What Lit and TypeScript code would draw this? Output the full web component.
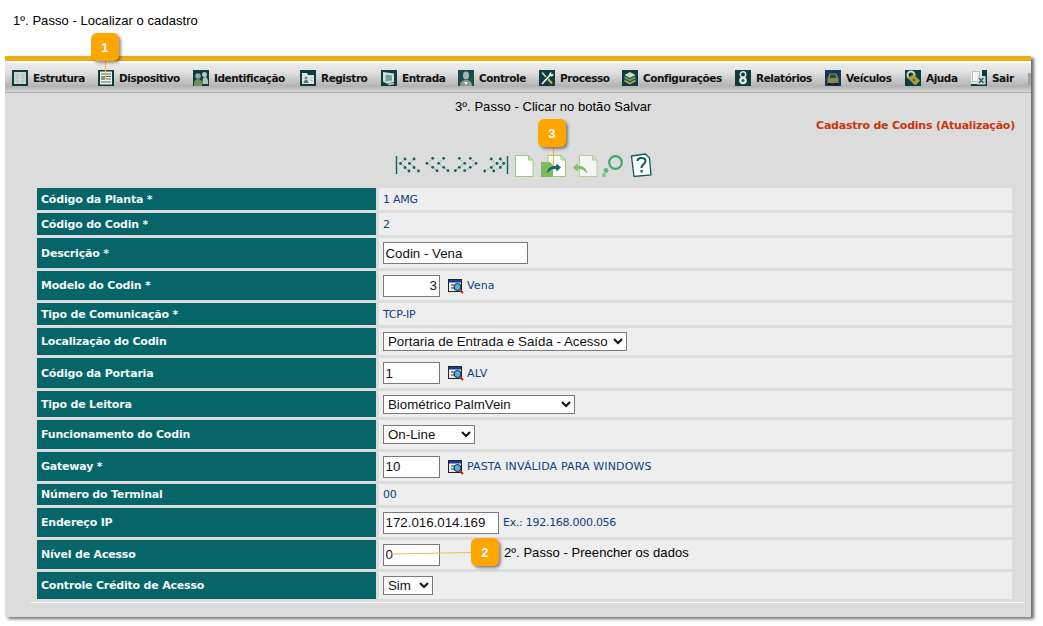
import { LitElement, html, css, svg, nothing } from "lit";
import { customElement } from "lit/decorators.js";

const D = "#0e3b3f";
const navIcons: Record<string, unknown> = {
  estrutura: svg`<rect width="16" height="16" fill="${D}"/><rect x="2" y="2" width="12" height="12" fill="#c6d4cd"/><path d="M4 5h8M4 8h8M4 11h8" stroke="#a9bdb3"/><path d="M8 3v10" stroke="#dbe4df"/>`,
  dispositivo: svg`<rect width="16" height="16" fill="${D}"/><rect x="2" y="1.500" width="12" height="13" fill="#eef2e8"/><path d="M3 4h10M8 6.500h5M8 9h5M3 12h10" stroke="#51706a"/><rect x="3" y="6" width="4" height="4" fill="#7e968f"/>`,
  identificacao: svg`<rect width="16" height="16" fill="${D}"/><circle cx="5" cy="6" r="2.800" fill="#97a8a0"/><circle cx="11.500" cy="4.500" r="2.500" fill="#b9c6c0"/><path d="M1 16v-3c0-3 2-4 4-4s4 1 4 4v3z" fill="#6f8f55"/><path d="M9.500 12c0-3 .5-5 2.500-5s3 2 3 5v2H9.500z" fill="#b3c2bb"/>`,
  registro: svg`<rect width="16" height="16" fill="${D}"/><path d="M2 3h5l1 2h6v9H2z" fill="#dbe4e2"/><circle cx="6" cy="8" r="1.500" fill="#6b8a86"/><path d="M3.500 13c0-2 1-3 2.500-3s2.500 1 2.500 3z" fill="#557a76"/><path d="M10 8h3M10 10.500h3" stroke="#a8bbb8"/>`,
  entrada: svg`<rect width="16" height="16" fill="${D}"/><path d="M2 2l11 1.500v8.500l-7.500 1.500-3.500-2z" fill="#d5e2dc"/><path d="M4.500 4.500l6.500 .8v5.200l-6.500 1z" fill="#6fa39a"/><path d="M6 13.500l7-1v2l-5 .8z" fill="#a9bfb8"/>`,
  controle: svg`<rect width="16" height="16" fill="#1b4a4c"/><ellipse cx="8" cy="5.500" rx="3" ry="4" fill="#a7b2af"/><path d="M2 16c0-4 2-6 6-6s6 2 6 6z" fill="#8a9996"/><path d="M6 12l2 3 2-3z" fill="#e8eeec"/>`,
  processo: svg`<rect width="16" height="16" fill="${D}"/><path d="M3 14L12 4" stroke="#eef2ee" stroke-width="1.800"/><path d="M12.500 2a2.500 2.500 0 0 0-2 3l2 1.500a2.500 2.500 0 0 0 2-3l-1.500 1-1-1z" fill="#eef2ee"/><path d="M3 2.500l4 4.500" stroke="#c8d2ce" stroke-width="1.600"/><path d="M9 9l4 4.500" stroke="#c9b84a" stroke-width="2"/>`,
  configuracoes: svg`<rect width="16" height="16" fill="${D}"/><path d="M2.500 5l5.500-3 5.500 3-5.500 3z" fill="#cfd8b8"/><path d="M2.500 6l5.500 3 5.500-3v2.500l-5.500 3-5.500-3z" fill="#5f9a72"/><path d="M2.500 9.500l5.500 3 5.500-3v2l-5.500 3-5.500-3z" fill="#b3ad55"/>`,
  relatorios: svg`<rect width="16" height="16" fill="${D}"/><circle cx="8" cy="4.500" r="2.700" fill="none" stroke="#dfe7e3" stroke-width="1.500"/><circle cx="8" cy="10.500" r="3.800" fill="#e7ece9"/><circle cx="8" cy="10.500" r="1.500" fill="#3b5f5f"/>`,
  veiculos: svg`<rect width="16" height="16" fill="#12365a"/><path d="M4.500 3.500h7l2 5v4.500h-11V8.500z" fill="#8c874a"/><path d="M5.500 4.500h5l1 3.500h-7z" fill="#2f4548"/><rect x="3" y="13" width="3" height="2" fill="#081820"/><rect x="10" y="13" width="3" height="2" fill="#081820"/>`,
  ajuda: svg`<rect width="16" height="16" fill="${D}"/><circle cx="6" cy="5" r="3.500" fill="none" stroke="#d3dac6" stroke-width="2"/><path d="M2.500 8l6-3.500 6.500 6-4 4.500-2.500-1z" fill="#a89f3c"/><circle cx="9" cy="10" r="1.200" fill="#5c5620"/>`,
  sair: svg`<rect width="16" height="16" fill="${D}"/><rect x="0" y="0" width="11" height="6" fill="#e1e8e7"/><rect x="0" y="0" width="6" height="14" fill="#e1e8e7"/><rect x="1.500" y="1.500" width="7" height="10" fill="#f4f7f6" stroke="#b4c2c1"/><rect x="6" y="6" width="8.500" height="8.500" fill="#cfdcdb"/><path d="M8 8l4.500 5M12.500 8l-4.500 5" stroke="#2d5a5a" stroke-width="1.300"/>`,
};

const NAV: [string, string, number][] = [
  ["estrutura", "Estrutura", 86], ["dispositivo", "Dispositivo", 95], ["identificacao", "Identificação", 107],
  ["registro", "Registro", 81], ["entrada", "Entrada", 77], ["controle", "Controle", 81], ["processo", "Processo", 83],
  ["configuracoes", "Configurações", 113], ["relatorios", "Relatórios", 90], ["veiculos", "Veículos", 80],
  ["ajuda", "Ajuda", 66], ["sair", "Sair", 50],
];

// Dots of the four first/previous/next/last arrows, in the toolbar icon's own coordinates.
const ARROW_DOTS = [
  [10, 4], [5.500, 8.500], [10, 12.500], [14, 16], [19, 4], [14.500, 8.500], [19, 12.500], [23.500, 16],
  [37.700, 3.300], [32, 8.300], [37.700, 12.300], [42, 15.700], [48.700, 3.300], [43.700, 8.300], [48.700, 12.300], [53, 15.700],
  [64.300, 3.300], [69.700, 8.300], [64.300, 12.300], [60.300, 15.700], [75.300, 3.300], [81, 8.300], [75.300, 12.300], [69.700, 15.700],
  [96.300, 4], [102, 8.500], [96.300, 12.500], [89.700, 16], [105.300, 4], [108.700, 8.500], [105.300, 12.500], [98.700, 16],
];
const MID_DOTS = [
  [7.700, 6.300], [7.700, 10.500], [12, 14.300], [16.700, 6.300], [16.700, 10.500], [21, 14.300],
  [35, 5.800], [35, 10.300], [39.700, 14], [46, 5.800], [46, 10.300], [50.700, 14],
  [67, 5.800], [67, 10.300], [62.300, 14], [78, 5.800], [78, 10.300], [72.700, 14],
  [99, 6.300], [99, 10.500], [93, 14.300], [107, 6.300], [107, 10.500], [102, 14.300],
];

const pageSheet = svg`<path d="M.5.5h13l4.500 4.500v16.500H.5z" fill="#fff" stroke="#9ccb7a"/><path d="M13.500.5V5H18z" fill="#cfe6bd" stroke="#9ccb7a"/>`;

type Row = { label: string; h: number; kind: string; text?: string; w?: number; right?: boolean; link?: string; note?: string; plain?: string };
const ROWS: Row[] = [
  { label: "Código da Planta *", h: 22, kind: "text", text: "1 AMG" },
  { label: "Código do Codin *", h: 22, kind: "text", text: "2" },
  { label: "Descrição *", h: 30, kind: "input", text: "Codin - Vena", w: 145 },
  { label: "Modelo do Codin *", h: 29, kind: "input", text: "3", w: 57, right: true, link: "Vena" },
  { label: "Tipo de Comunicação *", h: 22, kind: "text", text: "TCP-IP" },
  { label: "Localização do Codin", h: 27, kind: "select", text: "Portaria de Entrada e Saída - Acesso", w: 244 },
  { label: "Código da Portaria", h: 30, kind: "input", text: "1", w: 57, link: "ALV" },
  { label: "Tipo de Leitora", h: 26, kind: "select", text: "Biométrico PalmVein", w: 192 },
  { label: "Funcionamento do Codin", h: 29, kind: "select", text: "On-Line", w: 92 },
  { label: "Gateway *", h: 29, kind: "input", text: "10", w: 57, link: "PASTA INVÁLIDA PARA WINDOWS" },
  { label: "Número do Terminal", h: 21, kind: "text", text: "00" },
  { label: "Endereço IP", h: 29, kind: "input", text: "172.016.014.169", w: 116, note: "Ex.: 192.168.000.056" },
  { label: "Nível de Acesso", h: 29, kind: "input", text: "0", w: 57, plain: "2º. Passo - Preencher os dados" },
  { label: "Controle Crédito de Acesso", h: 27, kind: "select", text: "Sim", w: 50 },
];

@customElement("app-root")
export class AppRoot extends LitElement {
  static styles = css`
    :host { display: block; position: relative; width: 1043px; height: 626px; overflow: hidden; background: #fff; font-family: "Liberation Sans", Arial, sans-serif; font-size: 13px; letter-spacing: .05px; color: #000; }
    .cap { height: 56px; padding: 14px 0 0 13px; box-sizing: border-box; line-height: 14px; }
    .panel { margin-left: 5px; width: 1026px; height: 561px; background: #dcdcdc; box-shadow: 3px 2px 3px rgba(60,60,60,.75); display: flex; flex-direction: column; }
    .bar { height: 5px; background: #edae12; flex: none; }
    .gap { height: 2px; background: #fff; flex: none; }
    .nav { height: 30px; flex: none; box-sizing: border-box; border-bottom: 1px solid #b2b2b2; background: linear-gradient(#ececec 0, #e2e2e2 30%, #cbcbcb 55%, #b3b3b3 80%, #d4d4d4 100%); display: flex; align-items: center; padding: 1px 0 0 7px; position: relative; font-family: "DejaVu Sans", sans-serif; font-weight: 700; font-size: 10.5px; color: #111; letter-spacing: -.45px; white-space: nowrap; }
    .item { display: flex; align-items: center; gap: 5px; flex: none; box-sizing: border-box; }
    .item svg { width: 16px; height: 16px; flex: none; display: block; }
    .tick { position: absolute; right: 0; top: 10px; width: 3px; height: 12px; background: #a3a3a3; }
    .step { padding: 7px 0 0 450px; height: 14px; line-height: 14px; flex: none; }
    .title { text-align: right; padding: 5px 16px 0 0; height: 14px; line-height: 14px; flex: none; color: #c8380c; font-family: "DejaVu Sans", sans-serif; font-weight: 700; font-size: 11px; letter-spacing: -.22px; }
    .tools { display: flex; align-items: flex-start; padding: 22px 0 0 390px; height: 23px; flex: none; }
    .tools svg { display: block; flex: none; }
    .form { margin: 10px 19px 0 32px; display: flex; flex-direction: column; gap: 3px; }
    .row { display: grid; grid-template-columns: 339px 1fr; column-gap: 3px; }
    .lab { background: #056568; color: #f2f7f6; display: flex; align-items: center; padding-left: 4px; font-family: "DejaVu Sans", sans-serif; font-weight: 700; font-size: 11px; letter-spacing: -.2px; white-space: nowrap; }
    .val { background: #eeeeee; display: flex; align-items: center; padding-left: 4px; color: #0f4180; font-family: "DejaVu Sans", sans-serif; font-size: 11px; letter-spacing: -.28px; white-space: nowrap; }
    input, select { box-sizing: border-box; height: 22px; border: 1px solid #7a7a7a; background: #fff; font-family: "Liberation Sans", Arial, sans-serif; font-size: 13.3px; color: #111; padding: 0 1.500px; margin: 0; border-radius: 0; letter-spacing: 0; flex: none; }
    input.r { text-align: right; padding-right: 2px; }
    select { height: 19px; padding: 0; }
    .lk { display: flex; align-items: center; gap: 3px; margin-left: 8px; letter-spacing: .14px; }
    .lk svg { width: 16px; height: 16px; display: block; flex: none; }
    .note { margin-left: 4px; }
    .plain { margin: 0 0 5px 64px; color: #000; font-family: "Liberation Sans", Arial, sans-serif; font-size: 13px; letter-spacing: .05px; }
    .rule { margin: 3px 7px 0 26px; height: 1px; background: #fff; flex: none; }
    .call { position: absolute; width: 28px; height: 28px; border-radius: 6px; background: #fea500; color: #fff; font-weight: 700; font-size: 13px; display: flex; align-items: center; justify-content: center; box-shadow: 2px 2px 3px rgba(50,50,50,.55); z-index: 3; }
    .c1 { left: 91px; top: 33px; }
    .c2 { left: 471px; top: 538px; }
    .c3 { left: 538px; top: 119px; }
    .lead { position: absolute; left: 0; top: 0; width: 1043px; height: 626px; pointer-events: none; z-index: 2; }
    .s1 { margin-left: 2px; }
    .s2 { margin-left: 7px; }
    .s3 { margin-left: 5px; }
    .s4 { margin-left: 4px; }
    .s5 { margin-left: 5px; margin-top: -2px; }
  `;

  private lookup() {
    return html`<svg viewBox="0 0 16 16"><rect x=".5" y="1.500" width="13" height="12" fill="#e8edf4" stroke="#222"/><rect x="1" y="2" width="12" height="2.500" fill="#1b3a9c"/><path d="M3 7h3M3 10h3" stroke="#333"/><circle cx="9.500" cy="9" r="3.500" fill="#4fb2e6" stroke="#123"/><path d="M12 12l3 3" stroke="#d01818" stroke-width="2"/></svg>`;
  }

  private value(r: Row) {
    if (r.kind === "text") return html`${r.text}`;
    if (r.kind === "select")
      return html`<select style="width:${r.w}px"><option>${r.text}</option></select>`;
    return html`<input class=${r.right ? "r" : ""} style="width:${r.w}px" .value=${r.text} />
      ${r.link ? html`<span class="lk">${this.lookup()}${r.link}</span>` : nothing}
      ${r.note ? html`<span class="note">${r.note}</span>` : nothing}
      ${r.plain ? html`<span class="plain">${r.plain}</span>` : nothing}`;
  }

  render() {
    return html`
      <div class="cap">1º. Passo - Localizar o cadastro</div>
      <div class="panel">
        <div class="bar"></div>
        <div class="gap"></div>
        <div class="nav">
          ${NAV.map(([k, t, w]) => html`<div class="item" style="width:${w}px"><svg viewBox="0 0 16 16">${navIcons[k]}</svg><span>${t}</span></div>`)}
          <div class="tick"></div>
        </div>
        <div class="step">3º. Passo - Clicar no botão Salvar</div>
        <div class="title">Cadastro de Codins (Atualização)</div>
        <div class="tools">
          <svg width="118" height="22" viewBox="0 0 118 22">
            <path d="M1.500 1v18M112.500 1v18" stroke="#0e6058" stroke-width="1.400"/>
            ${MID_DOTS.map(([x, y]) => svg`<circle cx="${x}" cy="${y}" r=".9" fill="#9dbdb6"/>`)}
            ${ARROW_DOTS.map(([x, y]) => svg`<circle cx="${x}" cy="${y}" r="1.400" fill="#0e6058"/>`)}
          </svg>
          <svg class="s1" width="19" height="22" viewBox="0 0 19 22">${pageSheet}</svg>
          <svg class="s2" width="26" height="22" viewBox="0 0 26 22"><g transform="translate(6.500 0)">${pageSheet}</g><path d="M0 7h9l3 3v12H0z" fill="#7fb95f"/><path d="M6 18c.5-5 4-7.500 9-7l.5-2.500 4.500 4-4.500 4-.5-2.500c-3.500-.5-6 1-8.500 4z" fill="#126a5e"/></svg>
          <svg class="s3" width="26" height="22" viewBox="0 0 26 22"><g transform="translate(7 0)" opacity=".7">${pageSheet}</g><path d="M15 18c-.5-5-4-7.500-9-7l-.5-2.500-4.500 4 4.500 4 .5-2.500c3.500-.5 6 1 8.500 4z" fill="#86bd6c"/></svg>
          <svg class="s4" width="23" height="22" viewBox="0 0 23 22"><circle cx="13.500" cy="7.500" r="6.300" fill="none" stroke="#3fa96a" stroke-width="2.200"/><circle cx="4" cy="15.500" r="2.400" fill="#62b478"/><circle cx="2" cy="20" r="2" fill="#7fc08f"/></svg>
          <svg class="s5" width="22" height="24" viewBox="0 0 22 24"><path d="M1.500 3l14-2 4 4 1.500 17-17 1.500z" fill="#fff" stroke="#115a58" stroke-width="1.300"/><path d="M7.500 8c0-4 8-4 8 0 0 3-4 3-4 7" fill="none" stroke="#115a58" stroke-width="2"/><rect x="10.500" y="17" width="2.200" height="2.500" fill="#115a58"/></svg>
        </div>
        <div class="form">
          ${ROWS.map((r) => html`<div class="row" style="height:${r.h}px"><div class="lab">${r.label}</div><div class="val">${this.value(r)}</div></div>`)}
        </div>
        <div class="rule"></div>
      </div>
      <svg class="lead" viewBox="0 0 1043 626"><path d="M105.500 61V79M553.500 147V166M471 552.500L391 554" stroke="#f4b84a" stroke-width="1.200" fill="none"/></svg>
      <div class="call c1">1</div>
      <div class="call c2">2</div>
      <div class="call c3">3</div>
    `;
  }
}
